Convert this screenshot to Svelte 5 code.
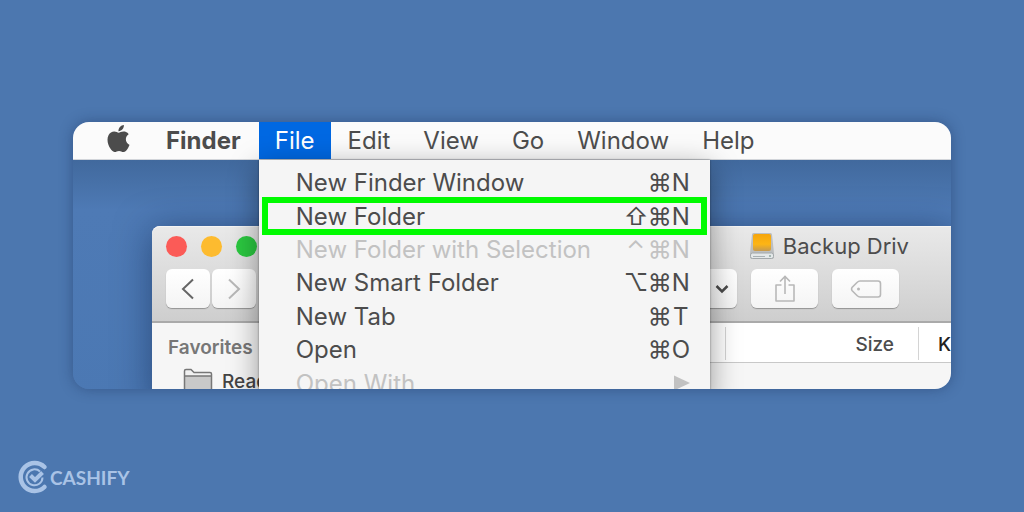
<script lang="ts">
  type MenuItem = {
    label: string;
    keys?: string[];
    disabled?: boolean;
    submenu?: boolean;
    highlighted?: boolean;
  };

  const menus = ["Finder", "File", "Edit", "View", "Go", "Window", "Help"];

  const items: MenuItem[] = [
    { label: "New Finder Window", keys: ["⌘", "N"] },
    { label: "New Folder", keys: ["⇧", "⌘", "N"], highlighted: true },
    { label: "New Folder with Selection", keys: ["⌃", "⌘", "N"], disabled: true },
    { label: "New Smart Folder", keys: ["⌥", "⌘", "N"] },
    { label: "New Tab", keys: ["⌘", "T"] },
    { label: "Open", keys: ["⌘", "O"] },
    { label: "Open With", disabled: true, submenu: true },
  ];
</script>

<main class="page">
  <section class="screen">
    <nav class="menubar">
      <button class="menu-title apple" aria-label="Apple menu">
        <svg viewBox="0 0 24 24" width="27" height="27" aria-hidden="true">
          <path
            fill="currentColor"
            d="M12.152 6.896c-.948 0-2.415-1.078-3.96-1.04-2.04.027-3.91 1.183-4.961 3.014-2.117 3.675-.546 9.103 1.519 12.09 1.013 1.454 2.208 3.09 3.792 3.039 1.52-.065 2.09-.987 3.935-.987 1.831 0 2.35.987 3.96.948 1.637-.026 2.676-1.48 3.676-2.948 1.156-1.688 1.636-3.325 1.662-3.415-.039-.013-3.182-1.221-3.22-4.857-.026-3.04 2.48-4.494 2.597-4.559-1.429-2.09-3.623-2.324-4.39-2.376-2-.156-3.675 1.09-4.61 1.09zM15.53 3.83c.843-1.012 1.4-2.427 1.245-3.83-1.207.052-2.662.805-3.532 1.818-.78.896-1.454 2.338-1.273 3.714 1.338.104 2.715-.688 3.559-1.701"
          />
        </svg>
      </button>
      {#each menus as menu}
        <div class="menu-slot">
          <button class="menu-title" class:app={menu === "Finder"} class:open={menu === "File"}>
            {menu}
          </button>
          {#if menu === "File"}
            <div class="dropdown">
              {#each items as item}
                <button
                  class="item"
                  class:highlighted={item.highlighted}
                  disabled={item.disabled}
                >
                  <span>{item.label}</span>
                  {#if item.submenu}
                    <svg class="arrow" viewBox="0 0 16 16" width="16" height="16" aria-hidden="true">
                      <path d="M0 0.5L16 8L0 15.5z" fill="currentColor" />
                    </svg>
                  {:else}
                    <span class="keys">
                      {#each item.keys ?? [] as key}
                        <kbd class:letter={key >= "A" && key <= "Z"}>{key}</kbd>
                      {/each}
                    </span>
                  {/if}
                </button>
              {/each}
            </div>
          {/if}
        </div>
      {/each}
    </nav>

    <div class="desktop">
      <div class="window">
        <header class="toolbar">
          <div class="title-row">
            <div class="lights">
              <button class="light close" aria-label="Close"></button>
              <button class="light minimize" aria-label="Minimize"></button>
              <button class="light zoom" aria-label="Zoom"></button>
            </div>
            <div class="title">
              <svg viewBox="0 0 26 28" width="26" height="28" aria-hidden="true">
                <defs>
                  <linearGradient id="drive" x1="0" y1="0" x2="0" y2="1">
                    <stop offset="0" stop-color="#f5a50c" />
                    <stop offset="0.6" stop-color="#fdb515" />
                    <stop offset="1" stop-color="#c69a50" />
                  </linearGradient>
                </defs>
                <path d="M3 2.5Q3 1 4.5 1H21.5Q23 1 23 2.5L25 21V25Q25 27 23 27H3Q1 27 1 25V21z" fill="#bdbfc0" />
                <rect x="4" y="2" width="18" height="17" rx="2" fill="url(#drive)" />
                <rect x="1.5" y="21" width="23" height="5.5" rx="2" fill="#e4e8e9" stroke="#a3a8aa" />
                <path d="M4 24.5H16" stroke="#a9b1b4" />
                <circle cx="21" cy="24" r="1" fill="#8fa7a0" />
              </svg>
              <span>Backup Driv</span>
            </div>
          </div>
          <div class="tool-row">
            <div class="history">
              <button class="tool nav" aria-label="Back">
                <svg viewBox="0 0 14 22" width="14" height="22" aria-hidden="true">
                  <path d="M12 1.5L2 11L12 20.5" fill="none" stroke="#666" stroke-width="2" />
                </svg>
              </button>
              <button class="tool nav" aria-label="Forward">
                <svg viewBox="0 0 14 22" width="14" height="22" aria-hidden="true">
                  <path d="M2 1.5L12 11L2 20.5" fill="none" stroke="#b8b8b8" stroke-width="2" />
                </svg>
              </button>
            </div>
            <div class="actions">
              <button class="tool drop" aria-label="Arrange">
                <svg viewBox="0 0 14 10" width="14" height="10" aria-hidden="true">
                  <path d="M1.5 2L7 7.5L12.5 2" fill="none" stroke="#4a4a4a" stroke-width="2.5" />
                </svg>
              </button>
              <button class="tool" aria-label="Share">
                <svg viewBox="0 0 22 28" width="22" height="28" aria-hidden="true">
                  <g fill="none" stroke="#b8b8b8" stroke-width="1.6">
                    <path d="M7.5 10H2V26H20V10H14.5" stroke-linejoin="round" />
                    <path d="M11 19V2M6 6.5L11 1.5L16 6.5" />
                  </g>
                </svg>
              </button>
              <button class="tool" aria-label="Edit tags">
                <svg viewBox="0 0 32 20" width="32" height="20" aria-hidden="true">
                  <path
                    d="M10 2H28Q30.5 2 30.5 4.5V15.5Q30.5 18 28 18H10Q8.5 18 7 16.5L2 11.5Q1 10 2 8.5L7 3.5Q8.5 2 10 2z"
                    fill="none"
                    stroke="#b8b8b8"
                    stroke-width="1.6"
                  />
                  <circle cx="8.5" cy="10" r="1.5" fill="#b8b8b8" />
                </svg>
              </button>
            </div>
          </div>
        </header>

        <div class="body">
          <aside class="sidebar">
            <h2>Favorites</h2>
            <a href="#reading">
              <svg viewBox="0 0 30 26" width="30" height="26" aria-hidden="true">
                <path d="M1.5 26V3Q1.5 1.5 3 1.5H8L11 4.5H27Q28.5 4.5 28.5 6V26z" fill="#f1f1f1" />
                <path d="M2 8H28V26H2z" fill="#c9c9c9" />
                <path
                  d="M1.5 26V3Q1.5 1.5 3 1.5H8L11 4.5H27Q28.5 4.5 28.5 6V26M1.5 8H28.5"
                  fill="none"
                  stroke="#777"
                  stroke-width="1.5"
                />
              </svg>
              <span>Reading</span>
            </a>
          </aside>
          <table class="files">
            <thead>
              <tr>
                <th class="name"></th>
                <th class="size">Size</th>
                <th class="kind">K</th>
              </tr>
            </thead>
          </table>
        </div>
      </div>
    </div>
  </section>

  <footer class="brand">
    <svg viewBox="0 0 32 34" width="32" height="34" aria-hidden="true">
      <g fill="none" stroke="currentColor">
        <path d="M26.5 7A14 14 0 1 0 26.5 27" stroke-width="4.5" stroke-linecap="round" />
        <path d="M22 11.5A8 8 0 1 0 24.5 17.5" stroke-width="2" />
        <path d="M12.5 15.5L17 20L24.5 12.5" stroke-width="4" />
      </g>
    </svg>
    <span>CASHIFY</span>
  </footer>
</main>

<style>
  :global(body) {
    background: #4c77af;
  }

  .page {
    display: flex;
    flex-direction: column;
    box-sizing: border-box;
    min-height: 100vh;
    padding: 122px 73px 18px;
    background: #4c77af;
    color: #4c4c4c;
    font-family: Inter, "Liberation Sans", sans-serif;
  }

  button {
    padding: 0;
    border: 0;
    background: none;
    color: inherit;
    font: inherit;
  }

  .screen {
    display: flex;
    flex-direction: column;
    height: 267px;
    overflow: hidden;
    border-radius: 16px;
    box-shadow: 0 0 14px rgba(20, 40, 80, 0.4);
  }

  .menubar {
    display: flex;
    gap: 1px;
    position: relative;
    z-index: 1;
    padding-left: 32px;
    background: #fbfbfb;
    border-bottom: 1px solid #d2d5da;
  }

  .menu-slot {
    position: relative;
  }

  .menu-title {
    display: block;
    height: 37px;
    padding: 0 16px;
    font-size: 24px;
    line-height: 37px;
    white-space: nowrap;
  }

  .apple {
    width: 44px;
    padding: 0 0 4px;
  }

  .apple svg {
    display: block;
  }

  .app {
    padding-right: 17px;
    font-weight: 700;
  }

  .open {
    background: #0068e2;
    color: #fff;
  }

  .dropdown {
    display: grid;
    grid-auto-rows: 1fr;
    position: absolute;
    top: 38px;
    left: 0;
    width: 451px;
    height: 234px;
    padding-top: 6px;
    background: #f5f5f5;
    box-shadow: 0 0 2px rgba(0, 0, 0, 0.4), 0 8px 28px rgba(0, 0, 0, 0.4);
  }

  .item {
    display: flex;
    position: relative;
    align-items: center;
    justify-content: space-between;
    padding: 0 20px 0 37px;
    font-size: 24px;
    text-align: left;
  }

  .item:disabled {
    color: #c2c2c2;
  }

  .highlighted::after {
    content: "";
    position: absolute;
    inset: -2px 3px;
    border: 6px solid #00fb00;
  }

  .keys {
    display: flex;
  }

  kbd {
    width: 24px;
    font: inherit;
    text-align: center;
  }

  .letter {
    width: 18px;
  }

  .desktop {
    flex: 1;
    padding: 66px 0 0 79px;
    background: linear-gradient(#41699d, #4e7ab5 50px, #4b78b3);
  }

  .window {
    background: #f6f6f6;
    border-top-left-radius: 8px;
    box-shadow: 0 4px 36px rgba(10, 30, 70, 0.5);
  }

  .toolbar {
    display: flex;
    flex-direction: column;
    gap: 9px;
    box-sizing: border-box;
    height: 97px;
    padding: 5px 0 0 14px;
    border-top: 1px solid #f4f4f4;
    border-bottom: 2px solid #aaa;
    border-top-left-radius: 8px;
    background: linear-gradient(#e9e9e9, #cecece);
  }

  .title-row,
  .tool-row {
    display: flex;
    justify-content: space-between;
  }

  .title-row {
    align-items: center;
    height: 28px;
    padding-right: 42px;
  }

  .tool-row {
    padding-right: 52px;
  }

  .lights {
    display: flex;
    gap: 14px;
  }

  .light {
    width: 21px;
    height: 21px;
    border-radius: 50%;
  }

  .close {
    background: #fb5b57;
  }

  .minimize {
    background: #fdbb2f;
  }

  .zoom {
    background: #2bc840;
  }

  .title {
    display: flex;
    align-items: center;
    gap: 8px;
    font-size: 22px;
    white-space: nowrap;
  }

  .history {
    display: flex;
    gap: 2px;
  }

  .actions {
    display: flex;
    gap: 14px;
  }

  .tool {
    display: flex;
    align-items: center;
    justify-content: center;
    width: 67px;
    height: 39px;
    border-radius: 6px;
    background: linear-gradient(#fff, #f4f4f4);
    box-shadow: 0 1px 1px rgba(0, 0, 0, 0.3);
  }

  .nav {
    width: 44px;
  }

  .drop {
    justify-content: flex-end;
    padding-right: 8px;
  }

  .body {
    display: flex;
    height: 80px;
  }

  .sidebar {
    flex: none;
    width: 240px;
  }

  .sidebar h2 {
    margin: 0;
    padding: 12px 0 0 16px;
    color: #777;
    font-size: 19px;
    font-weight: 600;
    line-height: 26px;
  }

  .sidebar a {
    display: flex;
    align-items: center;
    gap: 9px;
    padding: 7px 0 0 31px;
    color: #444;
    font-size: 19px;
    font-weight: 500;
    text-decoration: none;
  }

  .files {
    flex: 1;
    align-self: flex-start;
    border-collapse: collapse;
    background: #fff;
    border-bottom: 1px solid #c8c8c8;
  }

  .files th {
    position: relative;
    height: 36px;
    padding: 3px 0 0;
    font-size: 19px;
    font-weight: 500;
  }

  .files th + th::before {
    content: "";
    position: absolute;
    top: 4px;
    bottom: 2px;
    left: 0;
    border-left: 1px solid #d4d4d4;
  }

  .files .size {
    width: 169px;
    padding-right: 24px;
    text-align: right;
  }

  .files .kind {
    width: 11px;
    padding-left: 20px;
    color: #222;
    text-align: left;
  }

  .brand {
    display: flex;
    align-items: center;
    margin: auto 0 0 -55px;
    color: #a9c3e6;
    font-family: Lato, sans-serif;
    font-size: 19px;
    font-weight: 700;
  }
</style>
